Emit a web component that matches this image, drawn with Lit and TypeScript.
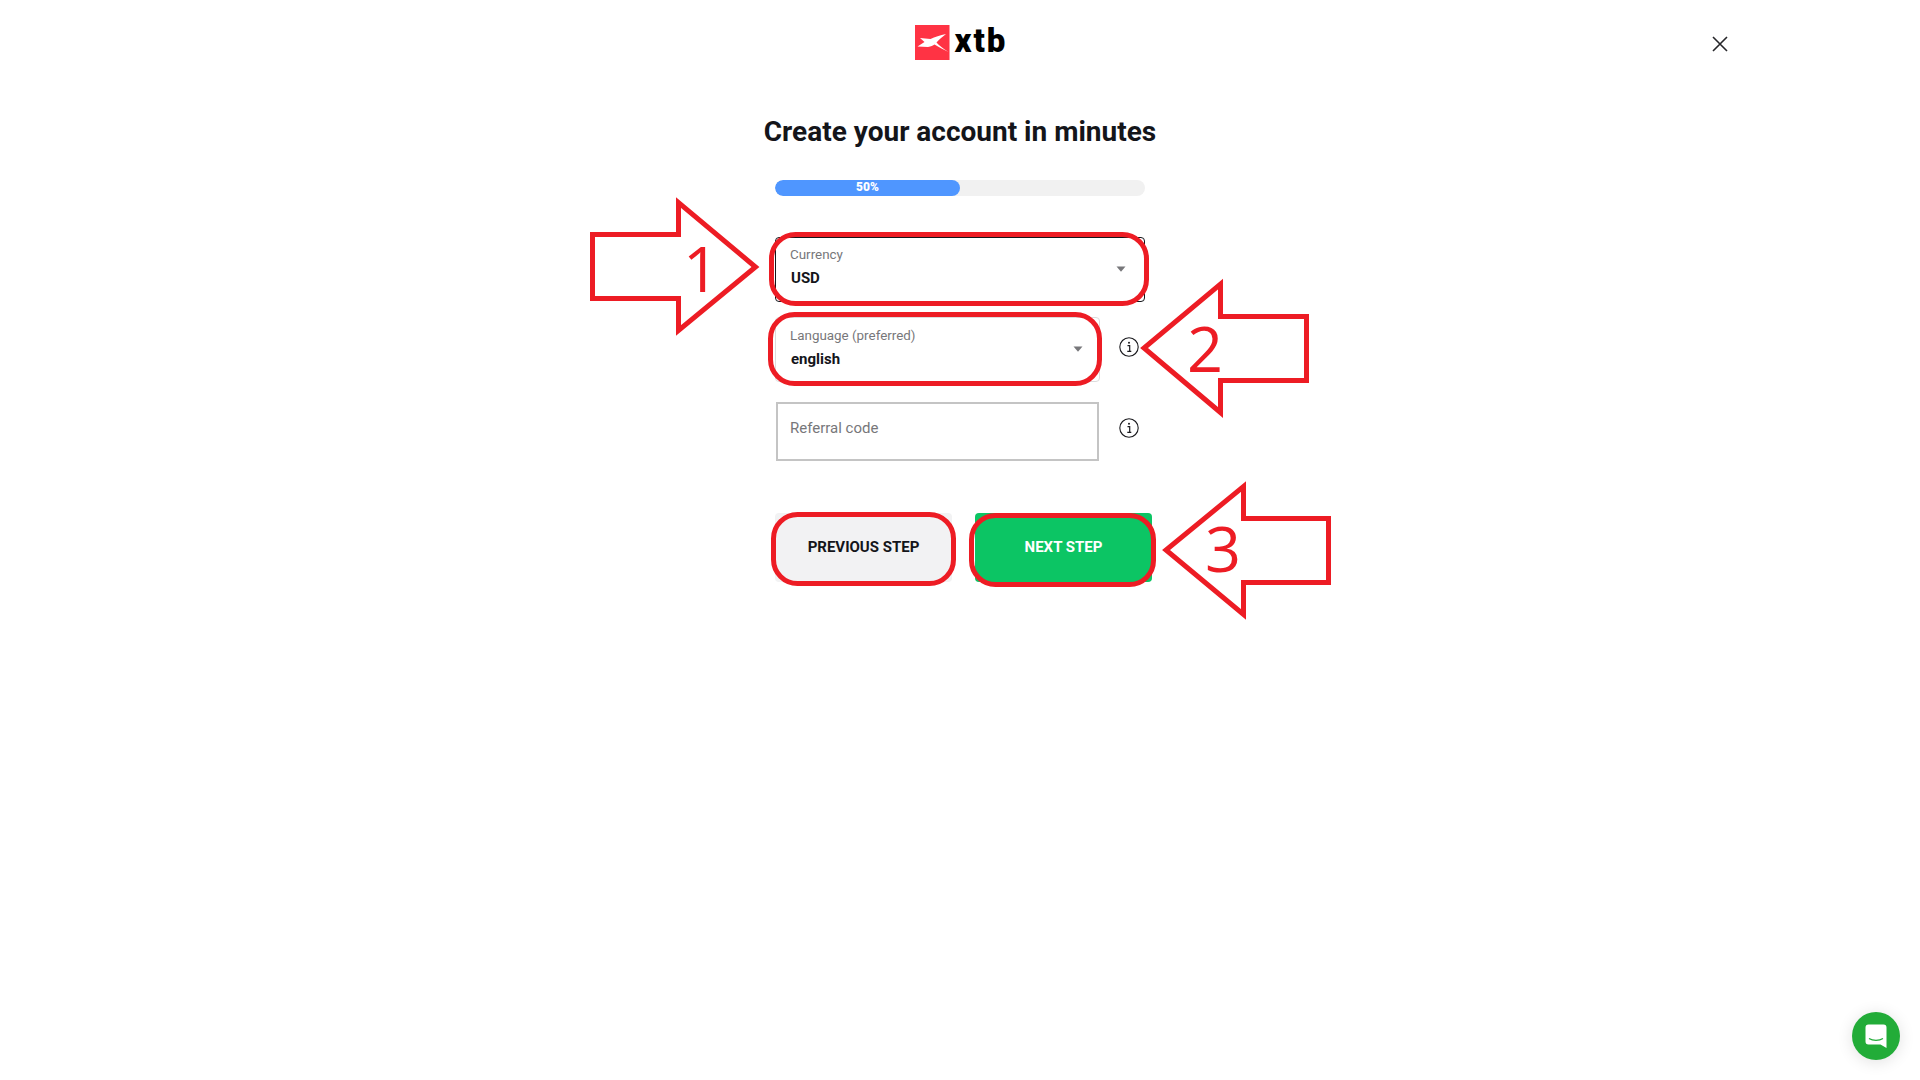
import { LitElement, html, css, svg } from "lit";
import { customElement } from "lit/decorators.js";

const infoIcon = html`<svg class="info" width="20" height="20" viewBox="0 0 20 20" aria-hidden="true">
  <circle cx="10" cy="10" r="9.2" fill="none" stroke="#1b1b1f" stroke-width="1.1"></circle>
  <circle cx="10" cy="5.8" r="1" fill="#1b1b1f"></circle>
  <path d="M8.5 8.6h2.2v5.6M8.3 14.4h4" fill="none" stroke="#1b1b1f" stroke-width="1.2"></path>
</svg>`;

const caret = html`<svg class="caret" width="10" height="6" viewBox="0 0 10 6" aria-hidden="true"><path d="M0.5 0.5h9L5 5.8z" fill="#77777a"></path></svg>`;

const annotations = svg`
  <g fill="none" stroke="#ed1c24" stroke-width="5">
    <rect x="771.5" y="234.5" width="375" height="69" rx="24"></rect>
    <rect x="770.5" y="314.5" width="329" height="69" rx="24"></rect>
    <rect x="773.5" y="514.5" width="180" height="69" rx="24"></rect>
    <rect x="971.5" y="515.5" width="182" height="69" rx="24"></rect>
    <path d="M592.5 234.5H678.5V202.5L755.5 267L678.5 330.5V298.5H592.5Z"></path>
    <path d="M1306.5 316.5H1220.5V284L1144 348L1220.5 412.5V380.5H1306.5Z"></path>
    <path d="M1328.5 518.5H1243.5V486.5L1166 550L1243.5 614.5V582.5H1328.5Z"></path>
  </g>
  <g fill="#ed1c24" font-family="'Open Sans', sans-serif" font-size="63" text-anchor="middle">
    <text x="701" y="292">1</text>
    <text x="1205" y="372">2</text>
    <text x="1223" y="572">3</text>
  </g>
`;

@customElement("app-root")
export class AppRoot extends LitElement {
  static styles = css`
    :host {
      display: block;
      position: relative;
      width: 100%;
      height: 1080px;
      overflow: hidden;
      background: #fff;
      font-family: Roboto, "Liberation Sans", sans-serif;
      color: #14151a;
    }
    .header {
      display: grid;
      grid-template-columns: 1fr auto 1fr;
      align-items: start;
      width: 1538px;
      margin: 0 auto;
      padding-top: 25px;
    }
    .logo {
      grid-column: 2;
      display: flex;
      align-items: center;
      gap: 5px;
      height: 35px;
      margin-left: 2px;
    }
    .logo-text {
      font-size: 33px;
      font-weight: 900;
      color: #000;
      line-height: 35px;
      letter-spacing: 2px;
      margin-top: -4px;
    }
    .close {
      grid-column: 3;
      justify-self: end;
      margin-top: 11px;
      margin-right: 1px;
      display: block;
    }
    .main {
      display: flex;
      flex-direction: column;
      align-items: center;
    }
    h1 {
      margin: 55px 0 0;
      font-size: 28px;
      line-height: 34px;
      font-weight: 700;
      letter-spacing: 0;
      color: #14151a;
      white-space: nowrap;
    }
    .form {
      width: 370px;
      margin-left: 0;
    }
    .progress {
      height: 16px;
      margin-top: 31px;
      border-radius: 8px;
      background: #f1f1f1;
      overflow: hidden;
    }
    .bar {
      height: 100%;
      background: #4f96ff;
      border-radius: 8px;
      color: #fff;
      font-size: 12px;
      font-weight: 900;
      line-height: 15px;
      text-align: center;
    }
    .field {
      box-sizing: border-box;
      position: relative;
      height: 65px;
      padding: 8px 14px;
      border: 1px solid #dcdcdc;
      border-radius: 4px;
      background: #fff;
    }
    .field.focus {
      border-color: #14151a;
      margin-top: 41px;
    }
    .row {
      display: flex;
      align-items: center;
      gap: 19px;
      margin-top: 15px;
    }
    .row .field {
      width: 325px;
      flex: none;
      padding-top: 9px;
    }
    .label {
      display: block;
      font-size: 13.4px;
      line-height: 17px;
      color: #77777a;
    }
    .value {
      display: block;
      margin-top: 6px;
      margin-left: 1px;
      font-size: 15px;
      line-height: 18px;
      font-weight: 700;
      color: #14151a;
    }
    .caret {
      position: absolute;
      top: 28px;
      right: 18px;
    }
    .row.language .caret { right: 16px; }
    .row.language .info { margin-top: -6px; }
    .row.referral {
      margin-top: 20px;
      padding-left: 1px;
      gap: 20px;
      align-items: flex-start;
    }
    .input {
      box-sizing: border-box;
      width: 323px;
      height: 59px;
      flex: none;
      padding: 15px 12px;
      border: 2px solid #c4c4c4;
      font-size: 15px;
      line-height: 18px;
      color: #77777a;
    }
    .row.referral .info { margin-top: 16px; }
    .actions {
      display: flex;
      gap: 23px;
      width: 377px;
      margin-top: 52px;
    }
    .btn {
      width: 177px;
      height: 69px;
      flex: none;
      border: 0;
      border-radius: 4px;
      font: 700 15px/66px Roboto, "Liberation Sans", sans-serif;
      padding: 0 0 2px;
      text-align: center;
      text-transform: uppercase;
    }
    .btn.prev { background: #f2f2f3; color: #14151a; }
    .btn.next { background: #0cc564; color: #fff; }
    .annotations {
      position: absolute;
      inset: 0;
      width: 1920px;
      height: 1080px;
      pointer-events: none;
    }
    .chat {
      position: absolute;
      left: 1852px;
      top: 1012px;
      width: 48px;
      height: 48px;
      border-radius: 50%;
      background: #22ac38;
      box-shadow: 0 2px 16px rgba(0, 0, 0, 0.12);
      display: flex;
      align-items: center;
      justify-content: center;
    }
  `;

  render() {
    return html`
      <header class="header">
        <div class="logo">
          <svg width="35" height="35" viewBox="0 0 35 35" aria-hidden="true">
            <rect width="34.5" height="35" fill="#ff3344"></rect>
            <path d="M31 9C25 10 20 12 15.5 14L5 13L9.5 17L2.5 21.5L13 22C16 21.5 18 20.5 19.5 19.5C24 22 29 25 33.5 27C28 23.5 24 20.5 21.5 17.5C24 14.5 28 11.5 31 9Z" fill="#fff"></path>
          </svg>
          <span class="logo-text">xtb</span>
        </div>
        <svg class="close" width="16" height="16" viewBox="0 0 16 16" aria-hidden="true">
          <path d="M1 1L15 15M15 1L1 15" stroke="#26262a" stroke-width="1.6" fill="none"></path>
        </svg>
      </header>
      <main class="main">
        <h1>Create your account in minutes</h1>
        <div class="form">
          <div class="progress"><div class="bar" style="width: 50%">50%</div></div>
          <div class="field focus">
            <span class="label">Currency</span>
            <span class="value">USD</span>
            ${caret}
          </div>
          <div class="row language">
            <div class="field">
              <span class="label">Language (preferred)</span>
              <span class="value">english</span>
              ${caret}
            </div>
            ${infoIcon}
          </div>
          <div class="row referral">
            <div class="input">Referral code</div>
            ${infoIcon}
          </div>
          <div class="actions">
            <button class="btn prev">Previous step</button>
            <button class="btn next">Next step</button>
          </div>
        </div>
      </main>
      <svg class="annotations" viewBox="0 0 1920 1080" aria-hidden="true">${annotations}</svg>
      <div class="chat">
        <svg width="24" height="26" viewBox="0 0 24 26" aria-hidden="true">
          <path d="M4.5 1.5H19.5A3 3 0 0 1 22.5 4.5V25L16.5 21.5H4.5A3 3 0 0 1 1.5 18.5V4.5A3 3 0 0 1 4.5 1.5Z" fill="#fff"></path>
          <path d="M5 15.5C9 18 15 18 19 15.5" stroke="#22ac38" stroke-width="1.2" fill="none"></path>
        </svg>
      </div>
    `;
  }
}
